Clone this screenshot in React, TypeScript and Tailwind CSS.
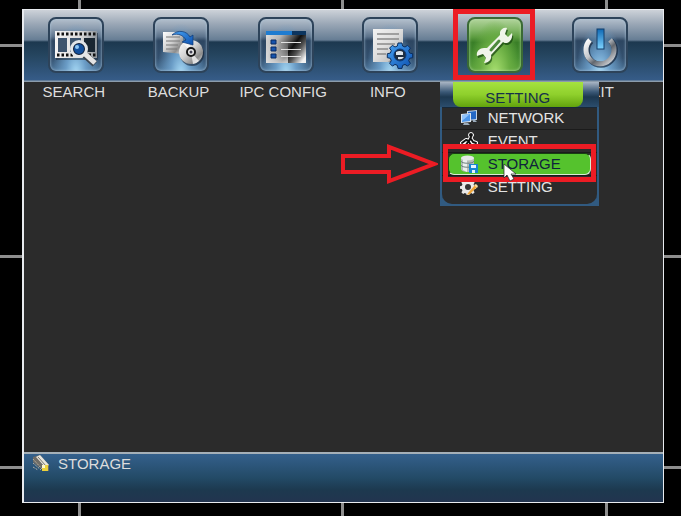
import { ReactNode } from "react";

const GEAR =
  "M-2 -12h4l.6 3 2.4 1 2.6-1.700 2.800 2.800-1.700 2.600 1 2.400 3 .6v4l-3 .6-1 2.400 1.700 2.600-2.800 2.800-2.600-1.700-2.400 1-.6 3h-4l-.6-3-2.400-1-2.600 1.700-2.800-2.800 1.700-2.600-1-2.400-3-.6v-4l3-.6 1-2.400-1.700-2.600 2.800-2.800 2.600 1.700 2.400-1z";

function Gradients() {
  return (
    <svg width="0" height="0" className="absolute" aria-hidden="true">
      <defs>
        <linearGradient id="metal" x1="0" y1="0" x2="1" y2="1">
          <stop offset="0" stopColor="#ffffff" />
          <stop offset=".45" stopColor="#d2d2d2" />
          <stop offset=".75" stopColor="#8d8d8d" />
          <stop offset="1" stopColor="#eeeeee" />
        </linearGradient>
        <linearGradient id="film" x1="0" y1="0" x2="1" y2="0">
          <stop offset="0" stopColor="#f4f4f4" />
          <stop offset=".6" stopColor="#dcdcdc" />
          <stop offset="1" stopColor="#8e959c" />
        </linearGradient>
        <linearGradient id="window" x1="0" y1=".2" x2="1" y2=".8">
          <stop offset="0" stopColor="#d8d8d8" />
          <stop offset=".25" stopColor="#b5b5b5" />
          <stop offset=".5" stopColor="#4c4c4c" />
          <stop offset=".62" stopColor="#101010" />
          <stop offset=".78" stopColor="#555555" />
          <stop offset="1" stopColor="#f2f2f2" />
        </linearGradient>
        <linearGradient id="shine" x1="0" y1="0" x2="0" y2="1">
          <stop offset=".3" stopColor="#ffffff" stopOpacity="0" />
          <stop offset="1" stopColor="#ffffff" stopOpacity=".75" />
        </linearGradient>
        <linearGradient id="ring" x1="0" y1="0" x2="1" y2="1">
          <stop offset="0" stopColor="#ffffff" />
          <stop offset=".4" stopColor="#c2c6cb" />
          <stop offset=".6" stopColor="#62676e" />
          <stop offset="1" stopColor="#e4e6e9" />
        </linearGradient>
        <linearGradient id="blue" x1="0" y1="0" x2="1" y2="1">
          <stop offset="0" stopColor="#4aa5f5" />
          <stop offset="1" stopColor="#0b4fae" />
        </linearGradient>
        <linearGradient id="bar" x1="0" y1="0" x2="0" y2="1">
          <stop offset="0" stopColor="#0f69b4" />
          <stop offset="1" stopColor="#7fd4ff" />
        </linearGradient>
      </defs>
    </svg>
  );
}

function SearchIcon() {
  return (
    <svg viewBox="0 0 56 56" className="size-14 shrink-0" aria-hidden="true">
      <rect x="8" y="16" width="42" height="27" fill="#16202c" opacity=".5" />
      <rect x="7" y="14" width="42" height="27" fill="url(#film)" />
      <path d="M9 17h39M9 38h39" stroke="#111" strokeWidth="3" strokeDasharray="2.500 2" />
      <path d="M10 21h9v14h-9zM22 21h11v14H22z" fill="#3d546d" />
      <path d="M36 21h11v14H36z" fill="#192632" />
      <path d="m37 38 10 9" stroke="#3c4650" strokeWidth="7" />
      <path d="m37 37 10 9" stroke="#e4e4e4" strokeWidth="5" />
      <circle cx="31" cy="32" r="7.500" fill="#10213b" stroke="#e2e5e8" strokeWidth="3" />
      <circle cx="31" cy="32" r="5" fill="#124f9c" />
      <circle cx="29" cy="30" r="2" fill="#8ec7f5" />
    </svg>
  );
}

function BackupIcon() {
  return (
    <svg viewBox="0 0 56 56" className="size-14 shrink-0" aria-hidden="true">
      <path d="M10 15h20v22l-20-2z" fill="url(#metal)" />
      <path d="M13 20h14M13 24h14M13 28h12M13 32h11" stroke="#777" />
      <circle cx="39" cy="37" r="12" fill="#142030" opacity=".6" />
      <circle cx="38" cy="35" r="12" fill="url(#metal)" />
      <path d="m38 35-8-9a12 12 0 0 1 6-3zM38 35l8 9a12 12 0 0 1-6 3z" fill="#fff" opacity=".7" />
      <circle cx="38" cy="35" r="4" fill="#eee" stroke="#181818" strokeWidth="2" />
      <circle cx="38" cy="35" r="1.500" fill="#445" />
      <path d="M19 18c6-6 15-4 18 2l3-2v10l-11-3 4-2c-3-5-8-7-14-5z" fill="url(#blue)" stroke="#0a3675" strokeWidth=".7" />
    </svg>
  );
}

function IpcIcon() {
  return (
    <svg viewBox="0 0 56 56" className="size-14 shrink-0" aria-hidden="true">
      <rect x="8" y="14" width="40" height="32" fill="url(#window)" />
      <rect x="8" y="14" width="22" height="32" fill="url(#shine)" />
      <rect x="8" y="14" width="40" height="4" fill="#0c355f" />
      <path d="M8 14h26v4H8z" fill="#1f7cd0" />
      <path d="M13 23h5v4h-5zM13 30h5v4h-5zM13 37h5v4h-5z" fill="#1553ad" stroke="#0a2b60" />
      <path d="M23 25.500h20M23 32.500h20M23 39.500h20" stroke="#e2e2e2" />
    </svg>
  );
}

function InfoIcon() {
  return (
    <svg viewBox="0 0 56 56" className="size-14 shrink-0" aria-hidden="true">
      <path d="M11 12h30v33H11z" fill="url(#metal)" />
      <path d="M11 12h30v20L26 45H11z" fill="#e9e9e9" opacity=".6" />
      <path d="M15 17h22M15 22h22M15 27h18M15 32h11M15 37h9" stroke="#8b8b8b" strokeWidth="1.500" />
      <g transform="translate(38 38)">
        <path d={GEAR} fill="url(#blue)" stroke="#0a2c5c" />
        <circle r="6" fill="#1f2e40" stroke="#0a3c80" />
        <path d="M-4-3q4-2 7 0v3h-7zM-2 2h6q-2 3-6 2z" fill="#dce4ec" />
      </g>
    </svg>
  );
}

function WrenchIcon() {
  const shape =
    "M33 15c1-3 4-5 7-4l-2 6 3 3 4-4c1 4-1 9-5 10-2 0-3 0-4-1L24 38c1 4-2 8-7 8l2-5-3-4-6 2c-1-4 2-8 7-8h3l13-13z";
  return (
    <svg viewBox="0 0 56 56" className="size-14 shrink-0" aria-hidden="true">
      <path d={shape} transform="translate(1 2)" fill="#14420d" opacity=".7" />
      <path d={shape} fill="#f0f5e9" />
      <path d="m32 24-8 9" stroke="#4d8a3c" strokeWidth="3" strokeLinecap="round" />
    </svg>
  );
}

function PowerIcon() {
  return (
    <svg viewBox="0 0 56 56" className="size-14 shrink-0" aria-hidden="true">
      <path d="M18 23a14 14 0 1 0 20 0" fill="none" stroke="#16253a" strokeWidth="6" opacity=".7" transform="translate(1 1)" />
      <path d="M18 23a14 14 0 1 0 20 0" fill="none" stroke="url(#ring)" strokeWidth="5" />
      <rect x="25" y="12" width="7" height="20" fill="url(#bar)" stroke="#123c68" />
    </svg>
  );
}

function NetworkIcon() {
  return (
    <svg viewBox="0 0 18 16" className="h-4 w-[18px]" aria-hidden="true">
      <path d="m7 1 10-1v10L7 11z" fill="#c3d3e4" />
      <path d="m8 2 8-1v8l-8 1z" fill="#2468c4" />
      <path d="m1 4 10-1v9L1 13z" fill="#dce6f0" />
      <path d="m2 5 8-1v7l-8 1z" fill="#4d96ea" />
      <path d="m2 5 8-1-8 7z" fill="#91c3fa" />
      <path d="M4 13h4l2 2H3zM13 10h2l2 2h-4z" fill="#9aabbb" />
    </svg>
  );
}

function EventIcon() {
  return (
    <svg viewBox="0 0 18 18" className="size-[18px]" aria-hidden="true">
      <g fill="none" strokeLinecap="round" strokeLinejoin="round">
        <path d="M11 5 9 9 6 8 2 11M11 7l2 3 3 1M9 10l2 3-1 3M8 10l-3 4-3 1" stroke="#fff" strokeWidth="4" />
        <circle cx="11" cy="3" r="2.500" fill="#111" stroke="#fff" />
        <path d="M11 5 9 9 6 8 2 11M11 7l2 3 3 1M9 10l2 3-1 3M8 10l-3 4-3 1" stroke="#111" strokeWidth="2" />
      </g>
    </svg>
  );
}

function StorageIcon() {
  return (
    <svg viewBox="0 0 18 18" className="size-[18px]" aria-hidden="true">
      <path d="M1 3v11c0 4 13 4 13 0V3z" fill="#b5bdb9" />
      <path d="M3 3v12l4 2V3z" fill="#edf1ef" />
      <ellipse cx="7.500" cy="3" rx="6.500" ry="2.500" fill="#e5e9e7" />
      <path d="M1 6c0 3 13 3 13 0M1 10c0 3 13 3 13 0" fill="none" stroke="#6e8180" />
      <rect x="9" y="9" width="9" height="9" fill="#1786d2" />
      <path d="M11 10h5v3h-5zM12 15h3v3h-3z" fill="#e4f4ff" />
    </svg>
  );
}

function SettingIcon() {
  return (
    <svg viewBox="0 0 18 16" className="h-4 w-[18px]" aria-hidden="true">
      <path d={GEAR} transform="translate(8 8) scale(.64)" fill="#e9e9e9" />
      <circle cx="8" cy="8" r="3" fill="#353535" />
      <path d="m8 14 7-8 2 2-7 7-3 1z" fill="#efa63a" />
      <path d="m14 6 2-1 2 2-1 2z" fill="#f8dca0" />
    </svg>
  );
}

function DriveIcon() {
  return (
    <svg viewBox="0 0 18 18" className="size-[18px]" aria-hidden="true">
      <path d="m1 3 7-2 9 10v6h-5L1 8z" fill="#6f6c66" />
      <path d="m4 3 4-2 9 10-4 2z" fill="#e8e5dc" />
      <path d="m1 5 9 10M1 9l8 7M1 13l5 3" stroke="#b4b0a5" strokeDasharray="2 1" />
      <path d="m6 3 8 9" stroke="#77736a" />
      <path d="M10 11h6v6h-6z" fill="#ecd13b" />
      <path d="M10 11h3v3h-3z" fill="#fff8c9" />
    </svg>
  );
}

function Pointer() {
  return (
    <svg
      viewBox="0 0 14 20"
      className="pointer-events-none absolute top-2.5 left-[61px] z-30 h-5 w-3.5"
      aria-hidden="true"
    >
      <path d="M1 1v14l3-3 3 6 4-2-3-5h5z" fill="#fff" stroke="#222" strokeWidth=".7" />
    </svg>
  );
}

function Arrow() {
  return (
    <svg
      viewBox="0 0 98 42"
      className="pointer-events-none absolute -top-2.5 right-[159px] z-30 h-[42px] w-[98px]"
      aria-hidden="true"
    >
      <path d="M3 13h46V4l45 17-45 17v-9H3z" fill="none" stroke="#ec1c24" strokeWidth="4" />
    </svg>
  );
}

type Item = { label: string; icon: ReactNode };

const items: Item[] = [
  { label: "SEARCH", icon: <SearchIcon /> },
  { label: "BACKUP", icon: <BackupIcon /> },
  { label: "IPC CONFIG", icon: <IpcIcon /> },
  { label: "INFO", icon: <InfoIcon /> },
  { label: "SETTING", icon: <WrenchIcon /> },
  { label: "EXIT", icon: <PowerIcon /> },
];

const menu: Item[] = [
  { label: "NETWORK", icon: <NetworkIcon /> },
  { label: "EVENT", icon: <EventIcon /> },
  { label: "STORAGE", icon: <StorageIcon /> },
  { label: "SETTING", icon: <SettingIcon /> },
];

const blueTile =
  "border-[#2d435a] shadow-[inset_0_0_3px_#a9c3d8] bg-[radial-gradient(ellipse_at_50%_105%,#a9dcf8_0%,#6a9cc6_28%,transparent_65%),linear-gradient(#b4bfcb_0%,#8c9db0_18%,#5b728b_34%,#2d4661_42%,#34516f_75%,#4c7499_100%)]";
const greenTile =
  "border-[#3a6a35] shadow-[inset_0_0_3px_#b5dba4] bg-[radial-gradient(ellipse_at_50%_105%,#a9e070_0%,#69ad42_40%,transparent_70%),linear-gradient(#b1d49c_0%,#85b96a_20%,#5c9c40_35%,#3a7f28_45%,#438c2f_75%,#5da23e_100%)]";

function SettingMenu() {
  return (
    <div className="absolute top-[72px] -left-[3px] z-10 w-[159px] bg-[#315a80]">
      <div className="flex justify-center bg-[linear-gradient(#a9b5c4,#3a5876_40%,#1d3850_60%,#2b4d6d)]">
        <div className="mr-[3px] h-[25px] w-[130px] rounded-b-lg bg-[linear-gradient(#a5e23f,#8fd02c_50%,#62a30d)] pt-1.5 text-center leading-5 text-[#16304a]">
          SETTING
        </div>
      </div>
      <ul className="mx-0.5 mb-0.5 rounded-b-[10px] bg-[#2b2b2b] pb-1.5 shadow-[inset_0_1px_#182838]">
        {menu.map((entry) => {
          const active = entry.label === "STORAGE";
          return (
            <li key={entry.label} className="relative border-b border-[#1b1b1b] last:border-none">
              <button
                className={
                  active
                    ? "ml-1.5 flex h-[22px] w-[143px] items-center gap-2.5 rounded-md border border-t-[#183e13] border-r-[#d9edd4] border-b-[#d9edd4] border-l-[#183e13] bg-[#55c22d] pl-[11px] text-[#10233c]"
                    : "flex h-[22px] w-full items-center gap-2.5 pl-[18px] text-[#e4e4e4]"
                }
              >
                {entry.icon}
                {entry.label}
              </button>
              {active && (
                <>
                  <div className="pointer-events-none absolute inset-x-px -top-[9px] z-20 h-[38px] border-[5px] border-[#ec1c24]" />
                  <Arrow />
                  <Pointer />
                </>
              )}
            </li>
          );
        })}
      </ul>
    </div>
  );
}

function Toolbar() {
  return (
    <nav className="bg-[linear-gradient(#cdd2d9_0px,#9aa7b6_14px,#667d94_30px,#1c384f_32px,#25455f_45px,#365c88_70px,#8c9cac_71px,#8c9cac_72px,transparent_72px)] pr-[11px]">
      <ul className="grid grid-cols-6">
        {items.map((item) => {
          const open = item.label === "SETTING";
          return (
            <li key={item.label} className="relative">
              <button
                aria-label={item.label}
                className="flex w-full flex-col items-center pt-[7px] text-[#dedede]"
              >
                <span
                  className={`flex size-14 items-center justify-center rounded-lg border-2 ${open ? greenTile : blueTile}`}
                >
                  {item.icon}
                </span>
                {!open && <span className="pt-[9px] pr-[5px] leading-5 whitespace-nowrap">{item.label}</span>}
              </button>
              {open && (
                <>
                  <div className="pointer-events-none absolute -top-px left-2.5 z-20 h-[71px] w-[82px] border-[5px] border-[#ec1c24]" />
                  <SettingMenu />
                </>
              )}
            </li>
          );
        })}
      </ul>
    </nav>
  );
}

function CameraGrid() {
  return (
    <div className="col-start-1 row-start-1 grid grid-cols-[78fr_261fr_261fr_73fr] grid-rows-[44fr_208fr_208fr_47fr] gap-[3px] bg-[#8e8e8e]">
      {Array.from({ length: 16 }, (_, i) => (
        <div key={i} className="bg-black" />
      ))}
    </div>
  );
}

export default function App() {
  return (
    <div className="grid min-h-screen bg-black font-['Liberation_Sans',Arial,sans-serif] text-[15px]">
      <Gradients />
      <CameraGrid />
      <main className="z-10 col-start-1 row-start-1 mt-[9px] mr-[17px] mb-[13px] ml-[22px] flex flex-col border border-l-2 border-[#e8ebef] bg-[#2b2b2b]">
        <Toolbar />
        <div className="flex-1" />
        <footer className="flex h-[50px] items-start gap-2 border-t-2 border-[#a5b0b8] bg-[linear-gradient(#34608c,#234a66_50%,#1d394f_75%,#22344f)] pl-2 leading-5 text-[#dcdcdc]">
          <DriveIcon />
          STORAGE
        </footer>
      </main>
    </div>
  );
}
